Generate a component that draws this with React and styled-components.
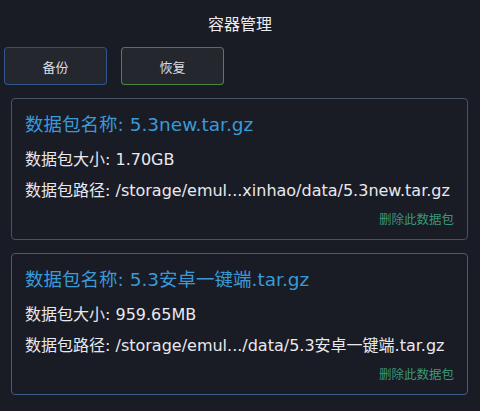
import styled, { createGlobalStyle } from "styled-components";

const GlobalStyle = createGlobalStyle`
  html, body {
    margin: 0;
    padding: 0;
    background: #191b25;
  }
  body {
    font-family: "DejaVu Sans", "Noto Sans CJK SC", sans-serif;
    color: #e6e7ec;
  }
`;

const Page = styled.div`
  width: 480px;
  height: 411px;
  overflow: hidden;
  background: #191b25;
`;

const Title = styled.div`
  height: 44px;
  display: flex;
  align-items: center;
  justify-content: center;
  font-size: 16px;
  color: #ececf0;
  padding-top: 1px;
  box-sizing: border-box;
`;

const Toolbar = styled.div`
  display: flex;
  gap: 14px;
  padding: 3px 0 0 4px;
`;

const Button = styled.div`
  width: 103px;
  height: 38px;
  box-sizing: border-box;
  border-radius: 4px;
  background: #25272f;
  border: 1px solid ${props => props.borderColor};
  border-top-color: ${props => props.topColor};
  display: flex;
  align-items: center;
  justify-content: center;
  font-size: 13px;
  color: #dcdde2;
`;

const List = styled.div`
  display: flex;
  flex-direction: column;
  gap: 13px;
  padding: 13px 0 0 11px;
`;

const Card = styled.div`
  width: 457px;
  box-sizing: border-box;
  border: 1px solid ${props => props.borderColor};
  border-radius: 4px;
  padding: 13px 13px 10px 13px;
  display: flex;
  flex-direction: column;
`;

const Name = styled.div`
  font-size: 18.5px;
  line-height: 25px;
  color: #3a9ad8;
  white-space: nowrap;
`;

const Info = styled.div`
  font-size: 16px;
  line-height: 22px;
  color: #e8e9ee;
  white-space: nowrap;
  margin-top: ${props => props.gap}px;
`;

const Delete = styled.div`
  align-self: flex-end;
  font-size: 12.5px;
  line-height: 18px;
  color: #3a9878;
  margin-top: 9px;
`;

const packs = [
  {
    name: "5.3new.tar.gz",
    size: "1.70GB",
    path: "/storage/emul...xinhao/data/5.3new.tar.gz",
    border: "#4a5366",
  },
  {
    name: "5.3安卓一键端.tar.gz",
    size: "959.65MB",
    path: "/storage/emul.../data/5.3安卓一键端.tar.gz",
    border: "#3b5d8c",
  },
];

export default function App() {
  return (
    <Page>
      <GlobalStyle />
      <Title>容器管理</Title>
      <Toolbar>
        <Button borderColor="#33578a" topColor="#474b57">备份</Button>
        <Button borderColor="#4b8a3c" topColor="#4f7a48">恢复</Button>
      </Toolbar>
      <List>
        {packs.map((p, i) => (
          <Card key={i} borderColor={p.border}>
            <Name>数据包名称: {p.name}</Name>
            <Info gap={12}>数据包大小: {p.size}</Info>
            <Info gap={9}>数据包路径: {p.path}</Info>
            <Delete>删除此数据包</Delete>
          </Card>
        ))}
      </List>
    </Page>
  );
}
